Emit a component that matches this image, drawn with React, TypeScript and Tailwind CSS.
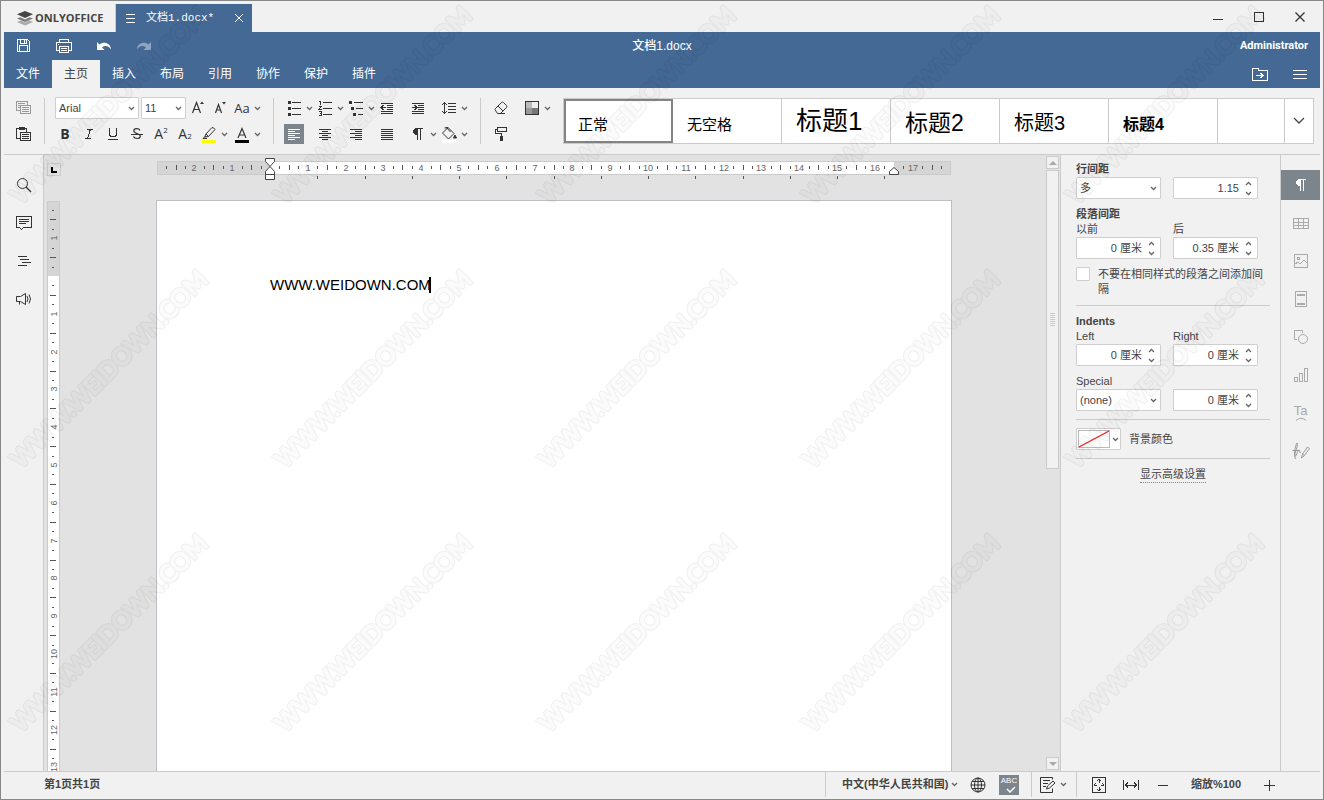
import React, { useEffect, useRef, useState } from "react";

type IconProps = {
  children: React.ReactNode;
  className?: string;
  crisp?: boolean;
};

// 20x20 outline icon, strokes sit on half pixels
function Icon({ children, className = "", crisp = true }: IconProps) {
  return (
    <svg
      viewBox="0 0 20 20"
      className={`w-5 h-5 shrink-0 ${className}`}
      fill="none"
      stroke="currentColor"
      shapeRendering={crisp ? "crispEdges" : "auto"}
      aria-hidden="true"
    >
      {children}
    </svg>
  );
}

function Caret({ className = "" }: { className?: string }) {
  return (
    <svg
      viewBox="0 0 7 5"
      className={`w-[7px] h-[5px] shrink-0 ${className}`}
      fill="none"
      stroke="#666"
      strokeWidth="1.3"
      aria-hidden="true"
    >
      <path d="M1 1l2.5 2.5L6 1" />
    </svg>
  );
}

function ToolButton({
  label,
  children,
  caret = false,
  active = false,
}: {
  label: string;
  children: React.ReactNode;
  caret?: boolean;
  active?: boolean;
}) {
  return (
    <div className="flex items-center h-5">
      <button
        type="button"
        aria-label={label}
        className={`w-5 h-5 flex items-center justify-center ${
          active ? "bg-[#7d858c] text-white" : "text-[#333]"
        }`}
      >
        {children}
      </button>
      {caret && (
        <button
          type="button"
          aria-label={`${label} options`}
          className="w-[11px] h-5 flex items-center justify-center"
        >
          <Caret />
        </button>
      )}
    </div>
  );
}

function Separator() {
  return <div className="w-px h-[46px] bg-[#cbcbcb] shrink-0" />;
}

function SelectBox({
  label,
  value,
  className = "",
}: {
  label: string;
  value: string;
  className?: string;
}) {
  return (
    <div className={`relative h-[22px] ${className}`}>
      <select
        aria-label={label}
        defaultValue={value}
        className="appearance-none block w-full h-full pl-[3px] pr-4 bg-white border border-[#cfcfcf] rounded-[1px] text-[11px] text-[#444]"
      >
        <option>{value}</option>
      </select>
      <Caret className="absolute right-1 top-[9px] pointer-events-none" />
    </div>
  );
}

function SpinBox({ label, value }: { label: string; value: string }) {
  return (
    <div className="flex h-[22px] w-[85px] bg-white border border-[#cfcfcf] rounded-[1px]">
      <input
        aria-label={label}
        defaultValue={value}
        className="flex-1 min-w-0 text-right text-[11px] text-[#444] bg-transparent outline-none"
      />
      <div className="flex flex-col w-[18px] shrink-0">
        <button
          type="button"
          aria-label={`${label} up`}
          className="flex-1 flex items-center justify-center"
        >
          <Caret className="rotate-180" />
        </button>
        <button
          type="button"
          aria-label={`${label} down`}
          className="flex-1 flex items-center justify-center"
        >
          <Caret />
        </button>
      </div>
    </div>
  );
}

/* ---------- Title bar ---------- */

function TitleBar() {
  return (
    <div className="flex items-end h-[31px] shrink-0">
      <div className="flex items-center gap-px h-7 w-[112px] pl-3 border-r border-[#cbcbcb]">
        <svg viewBox="0 0 18 16" className="w-[18px] h-4" aria-hidden="true">
          <path d="M9 8.5l8 3.5-8 3.5L1 12z" fill="#aaa" />
          <path d="M9 5l8 3.5L9 12.5 1 8.5z" fill="#f1f1f1" />
          <path d="M9 5.5l8 3-8 3.5-8-3.5z" fill="#7c7c7c" />
          <path d="M9 2l8 3.5-8 4-8-4z" fill="#f1f1f1" />
          <path d="M9 1l8 3.2L9 8 1 4.2z" fill="#444" />
        </svg>
        <span className="text-[11px] font-bold text-[#444] font-['Open_Sans',sans-serif]">
          ONLYOFFICE
        </span>
      </div>
      <div className="flex items-center h-7 w-[136px] px-[9px] bg-[#446995] text-white">
        <svg viewBox="0 0 12 10" className="w-3 h-[10px]" stroke="currentColor" shapeRendering="crispEdges">
          <path d="M1 1.5h9M1 5.5h9M1 9.5h9" />
        </svg>
        <span className="flex-1 pl-[9px] text-[11px] whitespace-nowrap font-['Liberation_Mono','Noto_Sans_CJK_SC',monospace]">
          文档1.docx*
        </span>
        <button type="button" aria-label="Close tab" className="w-2 h-2">
          <svg viewBox="0 0 8 8" stroke="currentColor" className="block w-2 h-2">
            <path d="M0 0l8 8M8 0L0 8" />
          </svg>
        </button>
      </div>
      <div className="flex-1" />
      <div className="flex self-center text-[#333]">
        <button type="button" aria-label="Minimize" className="w-[41px] h-6 flex items-center justify-center">
          <Icon>
            <path d="M5 12.5h10" />
          </Icon>
        </button>
        <button type="button" aria-label="Maximize" className="w-[41px] h-6 flex items-center justify-center">
          <Icon>
            <rect x="5.5" y="5.5" width="9" height="9" />
          </Icon>
        </button>
        <button type="button" aria-label="Close" className="w-[41px] h-6 flex items-center justify-center">
          <Icon crisp={false}>
            <path d="M5.5 5.5l9 9M14.5 5.5l-9 9" strokeWidth="1.3" />
          </Icon>
        </button>
      </div>
    </div>
  );
}

/* ---------- Blue header with menu tabs ---------- */

const TABS = ["文件", "主页", "插入", "布局", "引用", "协作", "保护", "插件"];

function Header() {
  return (
    <header className="bg-[#446995] text-white shrink-0">
      <div className="grid grid-cols-[1fr_auto_1fr] items-center h-7">
        <div className="flex">
          <button type="button" aria-label="Save" className="w-10 h-7 flex items-center justify-center">
            <Icon>
              <path d="M3.5 3.5h10l2 2v10h-12z" />
              <path d="M5.5 15.5v-6h8v6M6.5 3.5v4h6v-4M10.5 4v3" />
            </Icon>
          </button>
          <button type="button" aria-label="Print" className="w-10 h-7 flex items-center justify-center">
            <Icon>
              <path d="M5.5 6.5v-3h9v3M5.5 14.5h-3v-8h15v8h-3" />
              <rect x="5.5" y="10.5" width="9" height="6" />
              <path d="M7 12.5h6M7 14.5h6M4 8.5h1" />
            </Icon>
          </button>
          <button type="button" aria-label="Undo" className="w-10 h-7 flex items-center justify-center">
            <Icon crisp={false}>
              <path
                d="M3 6v8h7.5l-2.5-2.5c3-2.5 7-1.5 9 2C17 7.5 10 4.5 5.5 8.5z"
                fill="currentColor"
                stroke="none"
              />
            </Icon>
          </button>
          <button type="button" aria-label="Redo" className="w-10 h-7 flex items-center justify-center opacity-40">
            <Icon crisp={false} className="-scale-x-100">
              <path
                d="M3 6v8h7.5l-2.5-2.5c3-2.5 7-1.5 9 2C17 7.5 10 4.5 5.5 8.5z"
                fill="currentColor"
                stroke="none"
              />
            </Icon>
          </button>
        </div>
        <h1 className="text-[12px] font-medium">文档1.docx</h1>
        <span className="justify-self-end pr-3 text-[11px] font-bold font-[Roboto,sans-serif]">
          Administrator
        </span>
      </div>
      <div className="flex h-7">
        <nav className="flex flex-1">
          {TABS.map((tab) => (
            <button
              key={tab}
              type="button"
              className={`px-3 text-[12px] ${
                tab === "主页" ? "bg-[#f1f1f1] text-[#444]" : "text-white"
              }`}
            >
              {tab}
            </button>
          ))}
        </nav>
        <button type="button" aria-label="Open file location" className="w-10 flex items-center justify-center">
          <Icon>
            <path d="M2.5 16.5v-12h6v2h9v10z" />
            <path d="M6 11.5h7M10.5 9l2.5 2.5-2.5 2.5" />
          </Icon>
        </button>
        <button type="button" aria-label="View settings" className="w-10 flex items-center justify-center">
          <Icon>
            <path d="M3 6.5h14M3 10.5h14M3 14.5h14" />
          </Icon>
        </button>
      </div>
    </header>
  );
}

/* ---------- Home toolbar ---------- */

const STYLES = [
  { name: "正常", className: "text-[15px] pt-2" },
  { name: "无空格", className: "text-[15px] pt-2" },
  { name: "标题1", className: "text-[26px]" },
  { name: "标题2", className: "text-[23px] pt-1" },
  { name: "标题3", className: "text-[20px] pt-1" },
  { name: "标题4", className: "text-[16px] font-bold pt-2" },
];

function ClipboardGroup() {
  return (
    <div className="flex flex-col gap-[6px] w-10 items-center">
      <button type="button" aria-label="Copy" className="text-[#999]">
        <Icon>
          <path d="M6.5 12.5h-4v-9h11v3M4 5.5h7M4 7.5h2M4 9.5h2" />
          <rect x="6.5" y="7.5" width="10" height="8" />
          <path d="M8 9.5h7M8 11.5h7M8 13.5h7" />
        </Icon>
      </button>
      <button type="button" aria-label="Paste" className="text-[#333]">
        <Icon>
          <path d="M6.5 14.5h-4v-10h10v3" />
          <path d="M5 4h6" strokeWidth="3" />
          <rect x="6.5" y="8.5" width="10" height="8" />
          <path d="M8 10.5h7M8 12.5h7M8 14.5h7" />
        </Icon>
      </button>
    </div>
  );
}

function FontGroup() {
  return (
    <div className="flex flex-col gap-[6px] pl-[10px] w-[228px]">
      <div className="flex h-5 items-center">
        <SelectBox label="Font" value="Arial" className="w-[84px]" />
        <SelectBox label="Font size" value="11" className="w-[45px] ml-[2px]" />
        <div className="flex items-center gap-[2px] pl-[2px]">
          <ToolButton label="Increase font size">
            <Icon crisp={false}>
              <path d="M4.5 15l4-10.5L12.5 15M6 11.5h5" strokeWidth="1.2" />
              <path d="M12 6h4l-2-2.5z" fill="currentColor" stroke="none" />
            </Icon>
          </ToolButton>
          <ToolButton label="Decrease font size">
            <Icon crisp={false}>
              <path d="M5.5 15l3-8.5 3 8.5M6.5 12h4" strokeWidth="1.2" />
              <path d="M12 4h4l-2 2.5z" fill="currentColor" stroke="none" />
            </Icon>
          </ToolButton>
          <ToolButton label="Change case" caret>
            <span className="text-[13px] leading-5 font-['Open_Sans',sans-serif]">Aa</span>
          </ToolButton>
        </div>
      </div>
      <div className="flex gap-1 font-['Open_Sans',sans-serif] text-[14px] leading-5">
        <ToolButton label="Bold">
          <span className="font-bold">B</span>
        </ToolButton>
        <ToolButton label="Italic">
          <Icon>
            <path d="M8 5.5h6M6 14.5h6M11.5 5l-3 9.5" />
          </Icon>
        </ToolButton>
        <ToolButton label="Underline">
          <Icon>
            <path d="M6.5 4v6c0 3.5 7 3.5 7 0V4M5 15.5h10" />
          </Icon>
        </ToolButton>
        <ToolButton label="Strikethrough">
          <Icon crisp={false}>
            <path
              d="M13 6.5c-1-2.5-6.2-2.5-6.2.3 0 2.2 3 2.7 4.7 3.4 2.8 1.1 2.2 4.3-1.3 4.3-2 0-3.2-.8-3.7-2"
              strokeWidth="1.2"
            />
            <path d="M4 10.5h12" />
          </Icon>
        </ToolButton>
        <ToolButton label="Superscript">
          <span>A</span>
          <sup className="text-[8px] leading-none -top-1">2</sup>
        </ToolButton>
        <ToolButton label="Subscript">
          <span>A</span>
          <sub className="text-[8px] leading-none">2</sub>
        </ToolButton>
        <div className="flex gap-[2px]">
          <ToolButton label="Highlight color" caret>
            <Icon crisp={false}>
              <path d="M6.5 10.5L13 3.5q2 0 3 2l-6.5 7-3.5.5zM7 10l2.5 2.5M6.5 12L4 14.5h4" />
              <rect x="3" y="16" width="14" height="3" fill="#ff0" stroke="none" />
            </Icon>
          </ToolButton>
          <ToolButton label="Font color" caret>
            <Icon crisp={false}>
              <path d="M6 14l4-9.5L14 14M7.5 11h5" strokeWidth="1.2" />
              <rect x="3" y="16" width="14" height="3" fill="#000" stroke="none" />
            </Icon>
          </ToolButton>
        </div>
      </div>
    </div>
  );
}

function ParagraphGroup() {
  return (
    <div className="grid grid-cols-[repeat(6,31px)] content-start gap-y-[6px] pl-[10px] pr-[10px]">
      <ToolButton label="Bullets" caret>
        <Icon>
          <path d="M8 4.5h9M8 10.5h9M8 16.5h9" />
          <path d="M4 4.5h3M4 10.5h3M4 16.5h3" strokeWidth="3" />
        </Icon>
      </ToolButton>
      <ToolButton label="Numbering" caret>
        <Icon>
          <path d="M8 4.5h9M8 10.5h9M8 16.5h9" />
          <path d="M4 3.5h1.5V7M4 8.5h2.5L4 11.5h3M4 13.5h2.5v4H4M5 15.5h1" />
        </Icon>
      </ToolButton>
      <ToolButton label="Multilevel list" caret>
        <Icon>
          <path d="M8 4.5h9M10 10.5h7M12 16.5h5" />
          <path d="M3 4.5h3M5 10.5h3M7 16.5h3" strokeWidth="3" />
        </Icon>
      </ToolButton>
      <ToolButton label="Decrease indent">
        <Icon>
          <path d="M4 5.5h12M10 7.5h6M10 9.5h6M10 11.5h6M4 13.5h12M4 15.5h12" />
          <path d="M4 9.5h5M6.5 7L4 9.5 6.5 12" />
        </Icon>
      </ToolButton>
      <ToolButton label="Increase indent">
        <Icon>
          <path d="M4 5.5h12M10 7.5h6M10 9.5h6M10 11.5h6M4 13.5h12M4 15.5h12" />
          <path d="M4 9.5h5M6.5 7L9 9.5 6.5 12" />
        </Icon>
      </ToolButton>
      <ToolButton label="Line spacing" caret>
        <Icon>
          <path d="M9 5.5h8M9 8.5h8M9 11.5h8M9 14.5h8" />
          <path d="M5.5 4.5v11M3 7l2.5-2.5L8 7M3 13l2.5 2.5L8 13" />
        </Icon>
      </ToolButton>

      <ToolButton label="Align left" active>
        <Icon>
          <path d="M4 5.5h12M4 7.5h7M4 9.5h12M4 11.5h7M4 13.5h12M4 15.5h7" />
        </Icon>
      </ToolButton>
      <ToolButton label="Align center">
        <Icon>
          <path d="M4 5.5h12M7 7.5h6M4 9.5h12M7 11.5h6M4 13.5h12M7 15.5h6" />
        </Icon>
      </ToolButton>
      <ToolButton label="Align right">
        <Icon>
          <path d="M4 5.5h12M9 7.5h7M4 9.5h12M9 11.5h7M4 13.5h12M9 15.5h7" />
        </Icon>
      </ToolButton>
      <ToolButton label="Justify">
        <Icon>
          <path d="M4 5.5h12M4 7.5h12M4 9.5h12M4 11.5h12M4 13.5h12M4 15.5h12" />
        </Icon>
      </ToolButton>
      <ToolButton label="Nonprinting characters" caret>
        <Pilcrow />
      </ToolButton>
      <ToolButton label="Shading" caret>
        <Icon crisp={false}>
          <path d="M9 3.5l6 6-5.5 5.5-6-6zM9 3.5L5.5 4M7 3l4.5 5" />
          <path d="M16 11l1.5 3h-3z" fill="currentColor" />
          <rect x="3" y="16" width="14" height="3" fill="#fff" stroke="none" />
        </Icon>
      </ToolButton>
    </div>
  );
}

function Pilcrow() {
  return (
    <Icon>
      <path d="M9 11V4H7v1H6v1H5v3h1v1h1v1z" fill="currentColor" stroke="none" />
      <path d="M7 4.5h8M9.5 4v12M12.5 4v12" />
    </Icon>
  );
}

function EditGroup() {
  return (
    <div className="flex flex-col gap-[6px] pl-[10px] w-[82px]">
      <div className="flex gap-[11px]">
        <ToolButton label="Clear style">
          <Icon crisp={false}>
            <path d="M4.5 10.5L10.5 4.5q1-.8 2 0l3 3q.8 1 0 2l-6 6h-3L4.5 12.5q-.8-1 0-2zM7 8l5 5M9 15.5h5" />
          </Icon>
        </ToolButton>
        <ToolButton label="Change color scheme" caret>
          <Icon>
            <path d="M4 4h6v6H4z" fill="#bbb" stroke="none" />
            <path d="M10 4h6v6h-6z" fill="#eee" stroke="none" />
            <path d="M4 10h6v6H4z" fill="#999" stroke="none" />
            <path d="M10 10h6v6h-6z" fill="#777" stroke="none" />
            <rect x="3.5" y="3.5" width="13" height="13" />
          </Icon>
        </ToolButton>
      </div>
      <ToolButton label="Copy style">
        <Icon>
          <path d="M6.5 3.5h9v4h-9zM6.5 5.5h-2v4h6v3" />
          <path d="M10.5 12v5" strokeWidth="3" />
        </Icon>
      </ToolButton>
    </div>
  );
}

function StyleGallery() {
  return (
    <div className="flex flex-1 min-w-0 h-[46px] bg-white border border-[#cbcbcb]">
      {STYLES.map((style, i) => (
        <button
          key={style.name}
          type="button"
          className={`w-[109px] shrink-0 flex items-center text-black whitespace-nowrap ${
            i === 0 ? "border-2 border-[#848484] pl-3" : "border-r border-[#cbcbcb] pl-[14px]"
          } ${style.className}`}
        >
          {style.name}
        </button>
      ))}
      <div className="flex-1 border-r border-[#cbcbcb]" />
      <button type="button" aria-label="More styles" className="w-7 flex items-center justify-center">
        <svg viewBox="0 0 12 8" className="w-3 h-2" fill="none" stroke="#444" strokeWidth="1.3">
          <path d="M1 1l5 5 5-5" />
        </svg>
      </button>
    </div>
  );
}

function Toolbar() {
  return (
    <div className="flex pt-[10px] h-[67px] pr-[6px] border-b border-[#cbcbcb] shrink-0">
      <ClipboardGroup />
      <Separator />
      <FontGroup />
      <Separator />
      <ParagraphGroup />
      <Separator />
      <EditGroup />
      <StyleGallery />
    </div>
  );
}

/* ---------- Side bars ---------- */

function LeftBar() {
  const button = "w-10 h-[30px] flex items-center justify-center text-[#333]";
  return (
    <nav className="flex flex-col gap-2 pt-[15px] w-10 border-r border-[#cbcbcb] shrink-0">
      <button type="button" aria-label="Find" className={button}>
        <Icon crisp={false}>
          <circle cx="8.5" cy="8.5" r="5" />
          <path d="M12 12l5 5" strokeWidth="1.3" />
        </Icon>
      </button>
      <button type="button" aria-label="Comments" className={button}>
        <Icon>
          <path d="M2.5 3.5h15v11h-8l-2 2-2-2h-3z" />
          <path d="M5 6.5h10M5 8.5h10M5 10.5h7" />
        </Icon>
      </button>
      <button type="button" aria-label="Headings" className={button}>
        <Icon>
          <path d="M4 5.5h9M6 8.5h9M8 11.5h9M4 14.5h9" />
        </Icon>
      </button>
      <button type="button" aria-label="Feedback" className={button}>
        <Icon crisp={false}>
          <path d="M2.5 7.5h4l5-3v11l-5-3h-4zM5.5 12.5v3M13 7q2 3 0 6M15 5.5q3 4.5 0 9" />
        </Icon>
      </button>
    </nav>
  );
}

function RightBar() {
  const button = "w-full h-[30px] flex items-center justify-center text-[#aaa]";
  return (
    <nav className="flex flex-col gap-2 pt-[15px] w-10 border-l border-[#cbcbcb] shrink-0">
      <button
        type="button"
        aria-label="Paragraph settings"
        className="w-full h-[30px] flex items-center justify-center bg-[#7d858c] text-white"
      >
        <Pilcrow />
      </button>
      <button type="button" aria-label="Table settings" className={button}>
        <Icon>
          <path d="M2.5 5.5h15v10h-15zM2.5 9h15M2.5 12.5h15M7.5 5.5v10M12.5 5.5v10" />
        </Icon>
      </button>
      <button type="button" aria-label="Image settings" className={button}>
        <Icon>
          <rect x="3.5" y="3.5" width="13" height="13" />
          <path d="M4 13l3-2 2 2 4-4 3 3M6 6h2v2H6z" />
        </Icon>
      </button>
      <button type="button" aria-label="Header and footer settings" className={button}>
        <Icon>
          <rect x="4.5" y="2.5" width="11" height="15" />
          <path d="M6 5.5h8M6 14.5h8" strokeWidth="2" />
        </Icon>
      </button>
      <button type="button" aria-label="Shape settings" className={button}>
        <Icon crisp={false}>
          <path d="M6 12.5H3.5v-9h8V6" />
          <circle cx="12" cy="12" r="4.5" />
        </Icon>
      </button>
      <button type="button" aria-label="Chart settings" className={button}>
        <Icon>
          <path d="M3.5 12.5h3v4h-3zM8.5 8.5h3v8h-3zM13.5 3.5h3v13h-3z" />
        </Icon>
      </button>
      <button type="button" aria-label="Text art settings" className={`${button} flex-col`}>
        <span className="text-[13px] leading-3">Ta</span>
        <svg viewBox="0 0 12 4" className="w-3 h-1" fill="none" stroke="currentColor">
          <path d="M1 3.5q5-4.5 10 0" />
        </svg>
      </button>
      <button type="button" aria-label="Signature settings" className={button}>
        <Icon crisp={false} className="text-[#999]">
          <path d="M1.5 9.5h7M4.5 18c-2-4-.5-13 1.5-16 1.5 4-3 9-2 13.5C6 14.5 6.5 9 8 9s-.5 4 2 2M10.5 17l1-4 5-7 2 1.5-5 7zM11.5 13l2 1.5" />
        </Icon>
      </button>
    </nav>
  );
}

/* ---------- Rulers ---------- */

const CM = 37.8;

function tickRange(from: number, to: number) {
  const list: number[] = [];
  for (let q = from; q <= to; q++) list.push(q);
  return list;
}

function HorizontalRuler() {
  const zero = 114;
  const end = 738;
  return (
    <svg width="796" height="30" className="shrink-0" aria-hidden="true">
      <rect x="1" y="6" width="794" height="14" fill="#cbcbcb" />
      <rect x="2" y="7" width="792" height="12" fill="#d5d5d5" />
      <rect x={zero} y="7" width={end - zero} height="12" fill="#fff" />
      {tickRange(-11, 71).map((q) => {
        const x = Math.round(zero + (q * CM) / 4);
        if (q === 0 || q === 66) return null;
        if (q % 4 === 0) {
          return (
            <text
              key={q}
              x={x}
              y="16"
              fontSize="9"
              fill="#666"
              textAnchor="middle"
              className="font-['Liberation_Sans',sans-serif]"
            >
              {Math.abs(q / 4)}
            </text>
          );
        }
        const tall = q % 2 === 0;
        return (
          <rect key={q} x={x} y={tall ? 10 : 11} width="1" height={tall ? 5 : 3} fill="#555" />
        );
      })}
      {tickRange(1, 13).map((n) => (
        <rect key={n} x={Math.round(zero + n * CM * 1.25)} y="21" width="1" height="3" fill="#555" />
      ))}
      {/* indent markers */}
      <g fill="#fff" stroke="#444">
        <path d="M109.5 3.5h9v3l-4.5 5-4.5-5z" />
        <path d="M109.5 19.5v-3l4.5-5 4.5 5v3z" />
        <path d="M109.5 19.5h9v5h-9z" />
        <path d="M733.5 19.5v-3l4.5-4 4.5 4v3z" />
      </g>
    </svg>
  );
}

function VerticalRuler() {
  const zero = 75;
  const box = useRef<HTMLDivElement>(null);
  const [height, setHeight] = useState(0);

  // only the part of the scale that fits the window is drawn
  useEffect(() => {
    const update = () => setHeight(box.current?.clientHeight ?? 0);
    update();
    window.addEventListener("resize", update);
    return () => window.removeEventListener("resize", update);
  }, []);

  const last = Math.floor(((height - zero) * 4) / CM);

  return (
    <div ref={box} className="h-full overflow-hidden">
      <svg width="13" height="100%" className="block" aria-hidden="true">
        <rect width="13" height="100%" fill="#cbcbcb" />
        <rect x="1" y="1" width="11" height="74" fill="#d5d5d5" />
        <rect x="1" y={zero} width="11" height="100%" fill="#fff" />
        {tickRange(-7, last).map((q) => {
          const y = Math.round(zero + (q * CM) / 4);
          if (q === 0) return null;
          if (q % 4 === 0) {
            return (
              <text
                key={q}
                transform={`translate(10 ${y}) rotate(-90)`}
                fontSize="9"
                fill="#666"
                textAnchor="middle"
                className="font-['Liberation_Sans',sans-serif]"
              >
                {Math.abs(q / 4)}
              </text>
            );
          }
          const wide = q % 2 === 0;
          return (
            <rect key={q} x={wide ? 3 : 5} y={y} width={wide ? 6 : 2} height="1" fill="#555" />
          );
        })}
      </svg>
    </div>
  );
}

/* ---------- Document area ---------- */

function ScrollBar() {
  return (
    <div className="flex flex-col w-[14px] pt-px pb-px shrink-0">
      <button
        type="button"
        aria-label="Scroll up"
        className="w-[13px] h-[13px] flex items-center justify-center bg-[#f1f1f1] border border-[#cbcbcb]"
      >
        <svg viewBox="0 0 8 4" className="w-2 h-1" fill="#aaa">
          <path d="M0 4l4-4 4 4z" />
        </svg>
      </button>
      <div className="flex-1 min-h-0 pt-px">
        <div className="w-[13px] h-[51%] flex flex-col gap-px items-center justify-center bg-[#f1f1f1] border border-[#cbcbcb]">
          {[0, 1, 2, 3, 4, 5, 6].map((n) => (
            <span key={n} className="w-[5px] h-px bg-[#cbcbcb]" />
          ))}
        </div>
      </div>
      <button
        type="button"
        aria-label="Scroll down"
        className="w-[13px] h-[13px] flex items-center justify-center bg-[#f1f1f1] border border-[#cbcbcb]"
      >
        <svg viewBox="0 0 8 4" className="w-2 h-1" fill="#aaa">
          <path d="M0 0l4 4 4-4z" />
        </svg>
      </button>
    </div>
  );
}

function DocumentArea() {
  return (
    <main className="flex flex-1 min-w-0 bg-[#e2e2e2]">
      <div className="flex flex-col flex-1 min-w-0">
        <div className="flex h-[45px] shrink-0">
          <div className="w-[18px] pl-[3px] pt-2 shrink-0">
            <svg viewBox="0 0 14 13" className="w-[14px] h-[13px]" shapeRendering="crispEdges">
              <rect x="0.5" y="0.5" width="13" height="12" fill="#e2e2e2" stroke="#cbcbcb" />
              <path d="M5 4v5h5" fill="none" stroke="#000" strokeWidth="2" />
            </svg>
          </div>
          <div className="flex flex-1 min-w-0 justify-center">
            <HorizontalRuler />
          </div>
        </div>
        <div className="flex flex-1 min-h-0">
          <div className="w-[18px] pl-[3px] pt-px shrink-0">
            <VerticalRuler />
          </div>
          <div className="flex flex-1 min-w-0 justify-center">
            <article className="w-[796px] shrink-0 bg-white border border-b-0 border-[#bbbec2] pt-[74px] px-[113px]">
              <p className="flex items-center text-[15px] leading-5 text-black">
                WWW.WEIDOWN.COM
                <span className="w-[2px] h-4 -ml-[2px] bg-black" />
              </p>
            </article>
          </div>
        </div>
      </div>
      <ScrollBar />
    </main>
  );
}

/* ---------- Paragraph settings panel ---------- */

function Divider() {
  return <hr className="border-0 h-px bg-[#cbcbcb]" />;
}

function ParagraphPanel() {
  return (
    <aside className="w-[220px] shrink-0 flex flex-col gap-2 pl-[15px] pr-[10px] pt-[7px] border-l border-[#cbcbcb] text-[11px] leading-[15px] text-[#444]">
      <section>
        <h2 className="font-bold">行间距</h2>
        <div className="flex gap-3">
          <SelectBox label="行间距" value="多" className="w-[85px]" />
          <SpinBox label="行间距值" value="1.15" />
        </div>
      </section>
      <section>
        <h2 className="font-bold">段落间距</h2>
        <div className="flex gap-3">
          <div>
            <div>以前</div>
            <SpinBox label="以前" value="0 厘米" />
          </div>
          <div>
            <div>后</div>
            <SpinBox label="后" value="0.35 厘米" />
          </div>
        </div>
      </section>
      <label className="flex items-start gap-2">
        <input
          type="checkbox"
          className="appearance-none w-[14px] h-[14px] bg-white border border-[#cfcfcf] rounded-[1px] shrink-0"
        />
        <span>不要在相同样式的段落之间添加间隔</span>
      </label>
      <Divider />
      <section>
        <h2 className="font-bold">Indents</h2>
        <div className="flex gap-3">
          <div>
            <div>Left</div>
            <SpinBox label="Left" value="0 厘米" />
          </div>
          <div>
            <div>Right</div>
            <SpinBox label="Right" value="0 厘米" />
          </div>
        </div>
      </section>
      <section>
        <div>Special</div>
        <div className="flex gap-3">
          <SelectBox label="Special" value="(none)" className="w-[85px]" />
          <SpinBox label="Special value" value="0 厘米" />
        </div>
      </section>
      <Divider />
      <div className="flex items-center gap-2">
        <button
          type="button"
          aria-label="背景颜色"
          className="flex items-center gap-[2px] w-[45px] h-[22px] pl-px bg-white border border-[#cfcfcf] rounded-[1px]"
        >
          <svg viewBox="0 0 32 18" className="w-8 h-[18px]">
            <rect x="0.5" y="0.5" width="31" height="17" fill="#fff" stroke="#bbb" />
            <path d="M1 17L31 1" stroke="#e22" strokeWidth="1.3" />
          </svg>
          <Caret />
        </button>
        <span>背景颜色</span>
      </div>
      <Divider />
      <a href="#advanced" className="self-center border-b border-dotted border-[#888]">
        显示高级设置
      </a>
    </aside>
  );
}

/* ---------- Status bar ---------- */

function StatusBar() {
  const button = "w-8 h-5 flex items-center justify-center text-[#333]";
  return (
    <footer className="flex items-center h-7 pb-[2px] shrink-0 border-t border-[#cbcbcb] text-[11px] font-bold text-[#444]">
      <span className="flex-1 pl-10">第1页共1页</span>
      <div className="flex items-center h-[25px] w-[206px] pl-4 border-l border-[#cbcbcb]">
        <button type="button" className="flex items-center gap-[3px] whitespace-nowrap">
          中文(中华人民共和国)
          <Caret />
        </button>
        <button type="button" aria-label="Document language" className="ml-auto mr-[11px] text-[#333]">
          <Icon crisp={false}>
            <circle cx="10" cy="10" r="7" />
            <ellipse cx="10" cy="10" rx="3.5" ry="7" />
            <path d="M10 3v14M3 10h14M4 6.5h12M4 13.5h12" />
          </Icon>
        </button>
        <button
          type="button"
          aria-label="Spell checking"
          className="w-5 h-5 mr-3 flex flex-col items-center bg-[#7d858c] text-white"
        >
          <span className="text-[8px] leading-[10px] pt-px font-normal">ABC</span>
          <svg viewBox="0 0 10 7" className="w-[10px] h-[7px] ml-1" fill="none" stroke="currentColor" strokeWidth="1.5">
            <path d="M1 3l3 3 5-5" />
          </svg>
        </button>
      </div>
      <div className="flex items-center h-[25px] w-[45px] pl-[6px] border-l border-[#cbcbcb]">
        <button type="button" aria-label="Track changes" className="flex items-center gap-[2px] text-[#333]">
          <Icon crisp={false}>
            <path d="M14.5 4.5v-2h-12v15h12v-4M5 5.5h7M5 8.5h5M5 11.5h3" />
            <path d="M8.5 14l1-3 5.5-5 2 2-5.5 5z" />
          </Icon>
          <Caret />
        </button>
      </div>
      <div className="flex items-center h-[25px] w-[244px] pl-[6px] border-l border-[#cbcbcb]">
        <button type="button" aria-label="Fit to page" className={button}>
          <Icon>
            <rect x="3.5" y="2.5" width="13" height="15" />
            <path d="M10 4v4M10 12v4M5 10h3M12 10h3M8 6l2-2 2 2M8 14l2 2 2-2M6.5 8.5L5 10 6.5 11.5M13.5 8.5L15 10 13.5 11.5" />
          </Icon>
        </button>
        <button type="button" aria-label="Fit to width" className={button}>
          <Icon>
            <path d="M2.5 5v10M17.5 5v10M4.5 10h11M7 7.5L4.5 10 7 12.5M13 7.5l2.5 2.5-2.5 2.5" />
          </Icon>
        </button>
        <button type="button" aria-label="Zoom out" className={button}>
          <Icon>
            <path d="M5 10.5h10" />
          </Icon>
        </button>
        <span className="w-[74px] text-center">缩放%100</span>
        <button type="button" aria-label="Zoom in" className={button}>
          <Icon>
            <path d="M5 10.5h11M10.5 5v11" />
          </Icon>
        </button>
      </div>
    </footer>
  );
}

function WatermarkTexts() {
  return (
    <>
      {[0, 1, 2].map((row) =>
        [0, 1, 2, 3, 4].map((col) => (
          <text
            key={`${row}-${col}`}
            transform={`translate(${20 + col * 264} ${204 + row * 264}) rotate(-45)`}
          >
            WWW.WEIDOWN.COM
          </text>
        ))
      )}
    </>
  );
}

// Repeating diagonal site mark: only the rim around the letters is tinted
function Watermark() {
  return (
    <svg
      className="absolute inset-0 w-full h-full pointer-events-none text-[24px] font-[Lato,sans-serif]"
      strokeLinejoin="round"
      aria-hidden="true"
    >
      <mask id="rim" maskUnits="userSpaceOnUse" x="0" y="0" width="100%" height="100%">
        <g fill="#fff" stroke="#fff" strokeWidth="4">
          <WatermarkTexts />
        </g>
        <g fill="#444" stroke="#444" strokeWidth="1.6">
          <WatermarkTexts />
        </g>
      </mask>
      <rect width="100%" height="100%" fill="#000" fillOpacity="0.055" mask="url(#rim)" />
    </svg>
  );
}

export default function App() {
  return (
    <div className="relative flex flex-col h-screen overflow-hidden px-[3px] bg-[#f1f1f1] border border-[#888] font-['Liberation_Sans','Noto_Sans_CJK_SC',sans-serif]">
      <TitleBar />
      <Header />
      <Toolbar />
      <div className="flex flex-1 min-h-0">
        <LeftBar />
        <DocumentArea />
        <ParagraphPanel />
        <RightBar />
      </div>
      <StatusBar />
      <Watermark />
    </div>
  );
}
